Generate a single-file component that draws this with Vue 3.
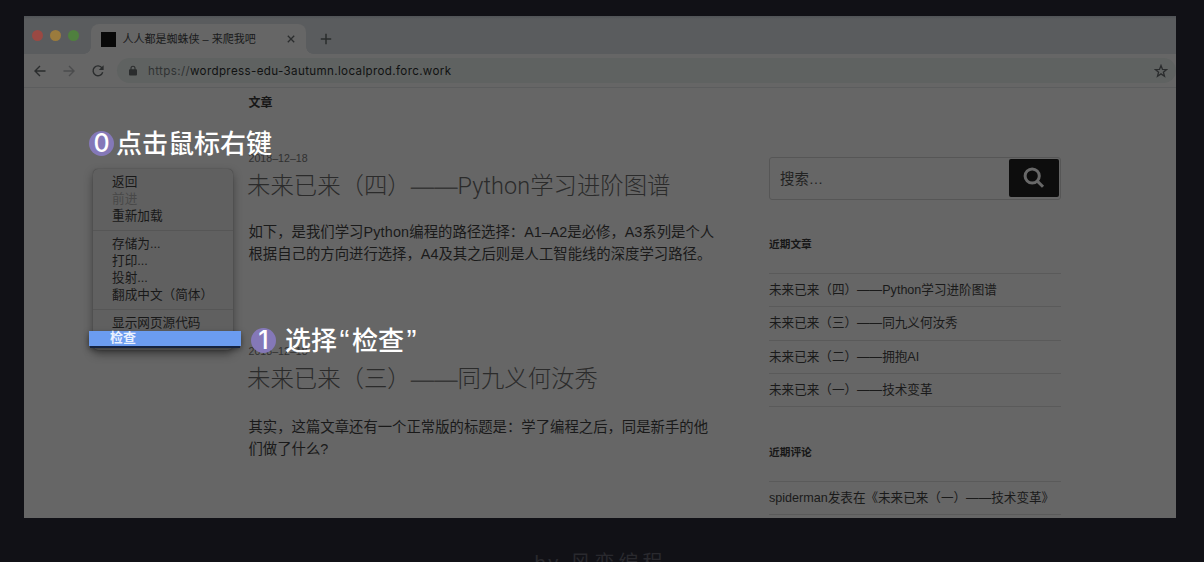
<script setup>
const menuGroups = [
  [{ label: '返回' }, { label: '前进', disabled: true }, { label: '重新加载' }],
  [{ label: '存储为...' }, { label: '打印...' }, { label: '投射...' }, { label: '翻成中文（简体）' }],
  [{ label: '显示网页源代码' }],
]
const posts = [
  {
    date: '2018–12–18',
    title: [{ t: '未来已来（四）' }, { t: '——', c: 'dash' }, { t: 'Python', c: 'roman' }, { t: '学习进阶图谱' }],
    lines: [
      ['如下，是我们学习', 'Python', '编程的路径选择：', 'A1–A2', '是必修，', 'A3', '系列是个人'],
      ['根据自己的方向进行选择，', 'A4', '及其之后则是人工智能线的深度学习路径。'],
    ],
  },
  {
    date: '2018–12–18',
    title: [{ t: '未来已来（三）' }, { t: '——', c: 'dash' }, { t: '同九义何汝秀' }],
    lines: [['其实，这篇文章还有一个正常版的标题是：学了编程之后，同是新手的他'], ['们做了什么', '?']],
  },
]
const recent = [
  '未来已来（四）——Python学习进阶图谱',
  '未来已来（三）——同九义何汝秀',
  '未来已来（二）——拥抱AI',
  '未来已来（一）——技术变革',
]
</script>

<template>
  <div class="stage">
    <div class="window">
      <div class="tabstrip">
        <div class="lights"><i class="red"></i><i class="yellow"></i><i class="green"></i></div>
        <div class="tab">
          <span class="favicon"></span>
          <span class="tab-title">人人都是蜘蛛侠 – 来爬我吧</span>
          <svg class="close" viewBox="0 0 8 8"><path d="M.8 .8 7.2 7.2M7.2 .8 .8 7.2" /></svg>
        </div>
        <svg class="plus" viewBox="0 0 12 12"><path d="M6 .8V11.2M.8 6H11.2" /></svg>
      </div>
      <div class="toolbar">
        <svg class="nav" viewBox="0 0 12 12"><path d="M11.5 6H1M6 1 1 6l5 5" /></svg>
        <svg class="nav dim" viewBox="0 0 12 12"><path d="M.5 6H11M6 1l5 5-5 5" /></svg>
        <svg class="reload" viewBox="0 0 14 14"><path d="M11 3.9A4.9 4.9 0 1 0 11.7 8.2" /><path class="head" d="M12.6 1.2V6H7.8Z" /></svg>
        <div class="address">
          <svg class="lock" viewBox="0 0 8 11"><path d="M2 5V3.2a2 2 0 0 1 4 0V5" /><rect x="0" y="4.2" width="8" height="6.3" rx="1" /></svg>
          <span class="url"><span class="scheme">https://</span>wordpress-edu-3autumn.localprod.forc.work</span>
          <svg class="star" viewBox="0 0 14 14"><path d="M7 1.5 8.5 5.4 12.6 5.6 9.4 8.2 10.5 12.2 7 9.9 3.5 12.2 4.6 8.2 1.4 5.6 5.5 5.4Z" /></svg>
        </div>
      </div>
      <div class="page">
        <main class="main">
          <h2 class="section">文章</h2>
          <article v-for="(p, i) in posts" :key="i" class="post">
            <div class="date">{{ p.date }}</div>
            <h3 class="title"><span v-for="(s, k) in p.title" :key="k" :class="s.c">{{ s.t }}</span></h3>
            <div class="body">
              <div v-for="(l, j) in p.lines" :key="j" class="line"><span v-for="(t, k) in l" :key="k" :class="{ latin: t === 'Python' }">{{ t }}</span></div>
            </div>
          </article>
        </main>
        <aside class="side">
          <div class="search">
            <span class="placeholder">搜索…</span>
            <div class="search-btn">
              <svg viewBox="0 0 22 22"><circle cx="9.2" cy="9" r="7.1" /><path d="M14.3 14.1 20 19.8" /></svg>
            </div>
          </div>
          <h4 class="side-title">近期文章</h4>
          <ul class="list"><li v-for="r in recent" :key="r">{{ r }}</li></ul>
          <h4 class="side-title second">近期评论</h4>
          <ul class="list"><li>spiderman发表在《未来已来（一）——技术变革》</li></ul>
        </aside>
      </div>
    </div>
    <footer class="credit"><span class="by">by</span> 风变编程</footer>

    <div class="menu">
      <div v-for="(g, i) in menuGroups" :key="i" class="group">
        <div v-for="m in g" :key="m.label" class="item" :class="{ disabled: m.disabled }">{{ m.label }}</div>
      </div>
    </div>
    <div class="inspect">检查</div>
    <div class="step zero"><b>0</b><span>点击鼠标右键</span></div>
    <div class="step one"><b>1</b><span>选择<i>“</i>检查<i>”</i></span></div>
  </div>
</template>

<style>
body { background: #111116; }
</style>
<style scoped>
.stage {
  position: relative; width: 1204px; height: 562px; overflow: hidden; background: #111116;
  font-family: "Liberation Sans", "Noto Sans CJK SC", sans-serif; color: #1a1a1a;
  white-space: nowrap; box-sizing: border-box; padding: 16px 28px 0 24px;
}
svg { display: block; flex: none; fill: none; stroke: #2a2c2d; }
.window { width: 1152px; height: 502px; background: #666; overflow: hidden; display: flex; flex-direction: column; }
.tabstrip { flex: none; height: 38px; background: linear-gradient(#505356 0, #5a5c5e 3px); display: flex; }
.lights { display: flex; gap: 7px; padding: 14px 0 0 7.5px; width: 59.5px; }
.lights i { width: 11px; height: 11px; border-radius: 50%; }
.red { background: #9a4943; }
.yellow { background: #9b7b3d; }
.green { background: #4f803e; }
.tab { position: relative; width: 215px; height: 30px; margin-top: 8px; background: #666; border-radius: 8px 8px 0 0; display: flex; align-items: center; box-sizing: border-box; padding: 0 10px; }
.tab::before, .tab::after { content: ""; position: absolute; bottom: 0; width: 7px; height: 7px; }
.tab::before { left: -7px; background: radial-gradient(circle at 0 0, transparent 6.5px, #666 7px); }
.tab::after { right: -7px; background: radial-gradient(circle at 100% 0, transparent 6.5px, #666 7px); }
.favicon { width: 15px; height: 15px; background: #080808; flex: none; }
.tab-title { margin-left: 6.5px; font-size: 11px; width: 164px; padding-bottom: 2px; color: #191a1b; }
.close { width: 8px; height: 8px; stroke-width: 1.3; }
.plus { width: 12px; height: 12px; margin: 17px 0 0 14px; stroke-width: 1.5; }
.toolbar { flex: none; height: 33px; border-bottom: 1px solid #5c5d5e; display: flex; align-items: center; padding-left: 10px; }
.nav { width: 12px; height: 12px; stroke-width: 1.4; margin-right: 17px; }
.nav.dim { stroke: #4b4c4d; margin-right: 15.5px; }
.reload { width: 14px; height: 14px; stroke-width: 1.4; }
.reload .head { fill: #2a2c2d; stroke: none; }
.address { margin-left: 12.5px; width: 1059px; flex: none; height: 25px; background: #5f6261; border-radius: 12.5px; display: flex; align-items: center; box-sizing: border-box; padding: 0 8px 0 12px; }
.lock { width: 8px; height: 11px; stroke-width: 1.1; }
.lock rect { fill: #2a2c2d; stroke: none; }
.url { margin-left: 11px; flex: 1; font-family: Inter, sans-serif; font-size: 11.6px; letter-spacing: .36px; color: #111212; }
.scheme { color: #303233; }
.star { width: 14px; height: 14px; stroke-width: 1.3; }
.page { flex: 1; display: flex; padding-left: 224.5px; overflow: hidden; }
.main { width: 520.5px; }
h2, h3, h4, ul { margin: 0; padding: 0; font-weight: 400; }
.section { font-size: 12px; font-weight: 700; line-height: 18px; height: 60px; padding-top: 6px; box-sizing: border-box; color: #171717; }
.post { height: 193px; padding-top: 3px; box-sizing: border-box; }
.date { font-size: 10.6px; line-height: 15px; letter-spacing: .03px; color: #303030; }
.title { font-family: "Noto Sans CJK SC", sans-serif; font-weight: 300; font-size: 23.4px; line-height: 34px; height: 34px; margin: 1px 0 0 -1.5px; color: #2b2b2b; }
.roman { font-family: Roboto, sans-serif; letter-spacing: .1px; }
.dash { font-family: "Liberation Sans", sans-serif; color: #363636; }
.body { margin-top: 19.5px; font-size: 14.36px; line-height: 22px; }
.post + .post .body { margin-top: 21.5px; }
.latin { letter-spacing: .2px; }
.side { width: 292px; padding-top: 68.5px; }
.search { height: 43px; box-sizing: border-box; border: 1.5px solid #565656; border-radius: 3px; display: flex; align-items: center; justify-content: space-between; padding: 0 1.5px 0 10px; font-size: 14.4px; color: #222; }
.placeholder { padding-bottom: 2px; }
.search-btn { width: 50px; height: 38px; background: #0d0d0d; border-radius: 2px; display: flex; align-items: center; justify-content: center; }
.search-btn svg { width: 22px; height: 22px; stroke: #686868; stroke-width: 3; }
.side-title { font-size: 10.7px; font-weight: 700; line-height: 16px; margin-top: 36.5px; color: #171717; }
.side-title.second { margin-top: 37px; }
.list { list-style: none; margin-top: 21px; border-top: 1px solid #5a5a5a; }
.list li { height: 33.3px; box-sizing: border-box; border-bottom: 1px solid #5a5a5a; font-size: 12.58px; line-height: 33px; }
.credit { margin-top: 32px; padding-left: 510.5px; font-size: 20px; line-height: 26px; letter-spacing: 4px; color: #29292e; }
.by { letter-spacing: 2.6px; }
.menu { position: absolute; left: 93px; top: 169px; width: 140px; height: 181px; box-sizing: border-box; padding-top: 5px; background: #606060; border-radius: 5px; box-shadow: 0 0 1px #333, 0 4px 10px rgba(0, 0, 0, .38); }
.group + .group { border-top: 1px solid #565656; margin-top: 5px; padding-top: 5px; }
.item { font-size: 12.65px; line-height: 17px; height: 17px; padding-left: 19px; color: #181818; }
.item.disabled { color: #484848; }
.inspect { position: absolute; left: 89px; top: 331px; width: 152px; height: 15px; box-sizing: border-box; padding-left: 21px; font-size: 13px; line-height: 14px; font-weight: 700; color: #e9f1ff; background: #6b9cf0; box-shadow: 0 3px 0 -1px #15233f, 0 3px 6px rgba(0, 0, 0, .5); }
.step { position: absolute; display: flex; align-items: center; font-size: 26px; line-height: 32px; color: #fff; font-weight: 500; }
.step b { width: 25px; height: 25px; border-radius: 50%; background: #8478b8; text-align: center; font: 500 25px/25px Inter, sans-serif; }
.step span { position: relative; top: 1px; }
.step i { font-style: normal; display: inline-block; width: 15px; text-align: center; font-size: 30px; line-height: 20px; }
.zero { left: 89px; top: 127px; }
.zero span { margin-left: 2px; }
.one { left: 251px; top: 324px; }
.one span { margin-left: 9px; }
</style>
